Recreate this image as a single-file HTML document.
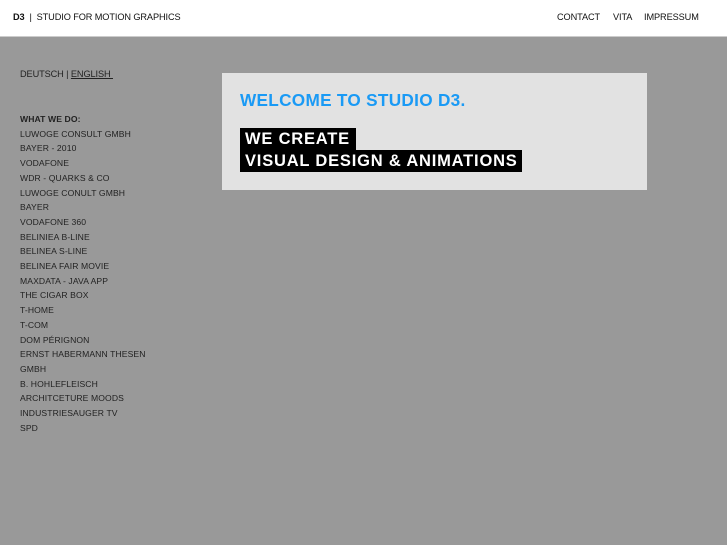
<!DOCTYPE html>
<html><head><style>
body{margin:0;width:727px;height:545px;background:#999;font-family:"Liberation Sans",sans-serif;overflow:hidden;position:relative}
.hd{position:absolute;left:0;top:0;width:727px;height:36px;background:#fff;border-bottom:1px solid #ccc}
.t{position:absolute;font-size:9.2px;color:#111;white-space:nowrap;letter-spacing:-0.1px}
.list{position:absolute;left:20px;top:112px;font-size:8.6px;line-height:14.7px;color:#222;letter-spacing:0.1px;white-space:nowrap}
.panel{position:absolute;left:222px;top:73px;width:425px;height:117px;background:#e2e2e2}
.w{position:absolute;left:18px;top:17px;color:#1a9af5;font-weight:bold;font-size:17.2px;letter-spacing:0.3px;white-space:nowrap}
.b{position:absolute;left:18px;background:#000;color:#fff;font-size:16.5px;height:22px;line-height:22px;padding:0 5px;letter-spacing:0.8px;font-weight:bold;white-space:nowrap;box-sizing:border-box}
</style></head><body>
<div class="hd">
<div class="t" style="left:13px;top:12px"><b>D3</b> &nbsp;| &nbsp;STUDIO FOR MOTION GRAPHICS</div>
<div class="t" style="left:557px;top:12px">CONTACT</div>
<div class="t" style="left:613px;top:12px">VITA</div>
<div class="t" style="left:644px;top:12px">IMPRESSUM</div>
</div>
<div class="t" style="left:20px;top:69px;color:#222">DEUTSCH | <u>ENGLISH&nbsp;</u></div>
<div class="list"><b>WHAT WE DO:</b><br>LUWOGE CONSULT GMBH<br>BAYER - 2010<br>VODAFONE<br>WDR - QUARKS &amp; CO<br>LUWOGE CONULT GMBH<br>BAYER<br>VODAFONE 360<br>BELINIEA B-LINE<br>BELINEA S-LINE<br>BELINEA FAIR MOVIE<br>MAXDATA - JAVA APP<br>THE CIGAR BOX<br>T-HOME<br>T-COM<br>DOM PÉRIGNON<br>ERNST HABERMANN THESEN<br>GMBH<br>B. HOHLEFLEISCH<br>ARCHITCETURE MOODS<br>INDUSTRIESAUGER TV<br>SPD</div>
<div class="panel">
<div class="w">WELCOME TO STUDIO D3.</div>
<div class="b" style="top:55px;width:116px">WE CREATE</div>
<div class="b" style="top:77px;width:282px">VISUAL DESIGN &amp; ANIMATIONS</div>
</div>
</body></html>
